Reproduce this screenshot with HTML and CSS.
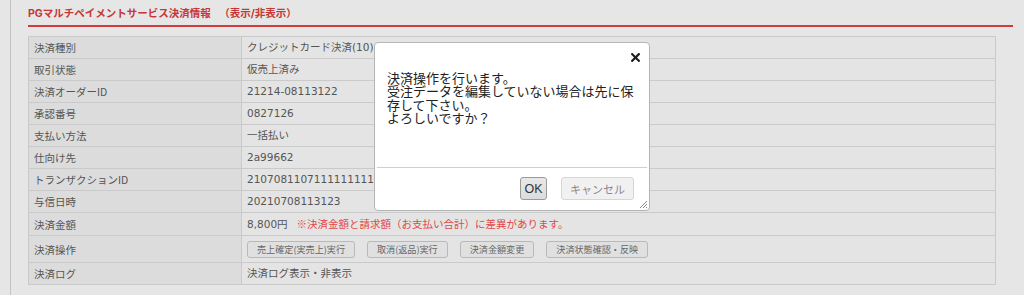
FILE: index.html
```html
<!DOCTYPE html>
<html lang="ja">
<head>
<meta charset="utf-8">
<title>PGマルチペイメントサービス決済情報</title>
<link rel="stylesheet" href="styles.css">
</head>
<body>
<div class="panel">
  <h2 class="section-title">PGマルチペイメントサービス決済情報 <span class="toggle">（表示/非表示）</span></h2>
  <table class="info">
    <tr><th>決済種別</th><td>クレジットカード決済(10)</td></tr>
    <tr><th>取引状態</th><td>仮売上済み</td></tr>
    <tr><th>決済オーダーID</th><td>21214-08113122</td></tr>
    <tr><th>承認番号</th><td>0827126</td></tr>
    <tr><th>支払い方法</th><td>一括払い</td></tr>
    <tr><th>仕向け先</th><td>2a99662</td></tr>
    <tr><th>トランザクションID</th><td>2107081107111111111111</td></tr>
    <tr><th>与信日時</th><td>20210708113123</td></tr>
    <tr><th>決済金額</th><td>8,800円<span class="warn">※決済金額と請求額（お支払い合計）に差異があります。</span></td></tr>
    <tr class="ops"><th>決済操作</th><td><div class="op-buttons"><button class="op">売上確定(実売上)実行</button><button class="op">取消(返品)実行</button><button class="op">決済金額変更</button><button class="op">決済状態確認・反映</button></div></td></tr>
    <tr><th>決済ログ</th><td>決済ログ表示・非表示</td></tr>
  </table>
</div>

<div class="dialog">
  <div class="dlg-titlebar">
    <span class="dlg-close"><svg width="9" height="9" viewBox="0 0 9 9"><path d="M1.2 1.2 L7.8 7.8 M7.8 1.2 L1.2 7.8" stroke="#1e1e1e" stroke-width="2.2" stroke-linecap="square"/></svg></span>
  </div>
  <div class="dlg-body">決済操作を行います。<br>受注データを編集していない場合は先に保存して下さい。<br>よろしいですか？</div>
  <div class="dlg-buttons">
    <button class="dlg-btn ok">OK</button>
    <button class="dlg-btn cancel">キャンセル</button>
  </div>
  <span class="grip"><svg width="9" height="9" viewBox="0 0 9 9"><path d="M8 1 L1 8 M8 4 L4 8 M8 7 L7 8" stroke="#8a8a8a" stroke-width="1"/></svg></span>
</div>
</body>
</html>
```

FILE: styles.css
```css
html, body {
  margin: 0;
  padding: 0;
  background: #e6e6e6;
  height: 100%;
  overflow: hidden;
}
body {
  font-family: Inter, "Noto Sans CJK JP", sans-serif;
  color: #555;
}
.panel {
  margin-left: 10px;
  width: 985px;
  height: 100%;
  border-left: 1px solid #c3c3c3;
  border-right: 1px solid #c3c3c3;
  padding: 0 16px 0 17px;
}
.section-title {
  margin: 0;
  padding: 7px 0 4px;
  font-size: 10.5px;
  line-height: 14px;
  font-weight: bold;
  color: #c73535;
  border-bottom: 2px solid #d13c3c;
}
.toggle {
  margin-left: 6px;
}
.info {
  margin-top: 9px;
  width: 968px;
  border-collapse: collapse;
  font-family: "DejaVu Sans", "Noto Sans CJK JP", sans-serif;
  font-size: 10.5px;
}
.info th, .info td {
  border: 1px solid #cacaca;
  padding: 0 5px;
  line-height: 21px;
  text-align: left;
  font-weight: normal;
  white-space: nowrap;
  color: #555;
}
.info th {
  width: 202px;
  background: #dcdcdc;
  font-family: "Noto Sans CJK JP", sans-serif;
}
.info td {
  background: #e4e4e4;
}
.kind {
  letter-spacing: 0;
}
.warn {
  color: #e04848;
  margin-left: 9px;
  font-family: "Noto Sans CJK JP", sans-serif;
}
.info .ops td {
  padding-top: 5px;
  padding-bottom: 4px;
  line-height: 17px;
}
.op-buttons {
  display: flex;
  gap: 12px;
}
.op {
  height: 17px;
  padding: 0 9px;
  font-family: "Noto Sans CJK JP", sans-serif;
  font-size: 9.1px;
  color: #666;
  background: #e0e0e0;
  border: 1px solid #b9b9b9;
  border-radius: 3px;
  line-height: 15px;
}

.dialog {
  position: absolute;
  left: 374px;
  top: 42px;
  width: 274px;
  height: 167px;
  background: #fff;
  border: 1px solid #b5b5b5;
  border-radius: 4px;
  display: flex;
  flex-direction: column;
  font-family: "Noto Sans CJK JP", sans-serif;
}
.dlg-titlebar {
  height: 28px;
  display: flex;
  justify-content: flex-end;
  align-items: center;
  padding-right: 9px;
}
.dlg-close {
  display: flex;
  width: 9px;
  height: 9px;
}
.dlg-body {
  flex: 1;
  padding: 0 10px 0 12px;
  font-size: 13px;
  line-height: 13.3px;
  color: #222;
}
.dlg-buttons {
  margin: 0 2px;
  border-top: 1px solid #cfcfcf;
  height: 43px;
  box-sizing: border-box;
  padding: 9px 13px 0 0;
  display: flex;
  justify-content: flex-end;
  gap: 14px;
}
.dlg-btn {
  height: 23px;
  border-radius: 3px;
  font-family: "Noto Sans CJK JP", sans-serif;
  font-size: 11px;
  padding: 0;
}
.ok {
  width: 27px;
  background: linear-gradient(#e8e8e8, #dcdcdc);
  border: 1px solid #9a9a9a;
  color: #333;
  font-family: "Liberation Sans", sans-serif;
  font-size: 12.5px;
  font-weight: normal;
}
.cancel {
  width: 73px;
  background: #f1f1f1;
  border: 1px solid #d6d6d6;
  color: #8a8a8a;
}
.grip {
  position: absolute;
  right: 1px;
  bottom: 1px;
  display: flex;
}
```
